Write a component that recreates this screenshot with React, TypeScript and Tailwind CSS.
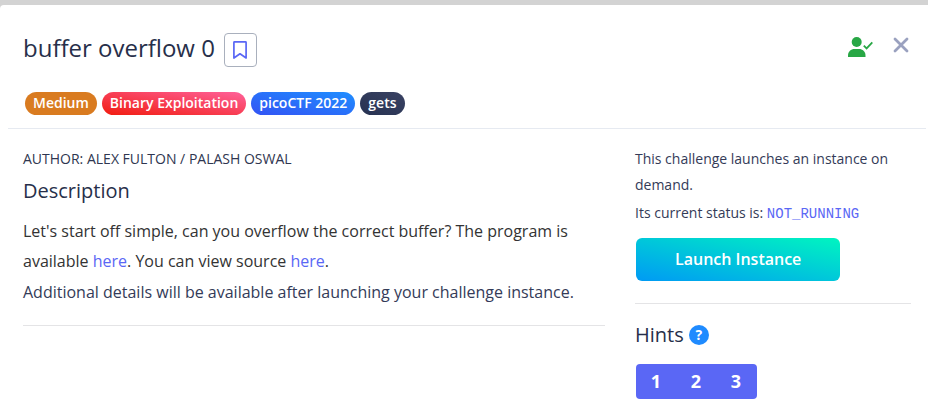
import React from 'react';

const tags = [
  { label: 'Medium', style: 'bg-[#d97b20]' },
  { label: 'Binary Exploitation', style: 'bg-linear-to-tr/srgb from-[#f11c10] to-[#ff619a]' },
  { label: 'picoCTF 2022', style: 'bg-linear-to-tr/srgb from-[#3353f4] to-[#1f8eff]' },
  { label: 'gets', style: 'bg-linear-to-tr/srgb from-[#273251] to-[#394263]' },
];

const hints = [1, 2, 3];

const BookmarkIcon = () => (
  <svg width="16" height="20" viewBox="0 0 16 20" fill="none" stroke="#5a67f5" strokeWidth="1.7" aria-hidden="true">
    <path d="M1.9 2.4Q1.9 1.8 2.5 1.8H13.5Q14.1 1.8 14.1 2.4V18L8 13.8L1.9 18Z" strokeLinejoin="round" />
  </svg>
);

const SolvedIcon = () => (
  <svg width="25" height="20" viewBox="0 0 25 20" aria-label="Solved by users" role="img">
    <circle cx="8.7" cy="5" r="5" fill="#28a745" />
    <path d="M0 20V18.5C0 14.5 3 12 6.5 12H11C14.5 12 17.5 14.5 17.5 18.5V20Z" fill="#28a745" />
    <path d="M15.8 8.6L18.6 11.4L24.3 5.4" fill="none" stroke="#28a745" strokeWidth="1.8" />
  </svg>
);

const CloseIcon = () => (
  <svg width="16" height="16" viewBox="0 0 16 16" fill="none" stroke="#9aa1bf" strokeWidth="2.8" strokeLinecap="round" aria-hidden="true">
    <path d="M2 2L14 14M14 2L2 14" />
  </svg>
);

const ChallengeHeader = () => (
  <header className="ml-2 mr-0.5 border-b border-[#e6eaf1] pr-[17px] pl-[15px] pt-7 pb-[13px]">
    <div className="flex items-start justify-between">
      <div className="flex items-start gap-[9px]">
        <h1 className="text-2xl leading-[30px] text-[#272f4a]">buffer overflow 0</h1>
        <button type="button" aria-label="Bookmark" className="flex h-[34px] w-[33px] items-center justify-center rounded border border-[#a9b0bd]">
          <BookmarkIcon />
        </button>
      </div>
      <div className="flex items-start gap-5 pt-1">
        <SolvedIcon />
        <button type="button" aria-label="Close">
          <CloseIcon />
        </button>
      </div>
    </div>
    <ul className="ml-0.5 mt-[25px] flex gap-[5px]">
      {tags.map((tag) => (
        <li key={tag.label} className={`rounded-full px-2 pb-0.5 text-sm leading-[21px] font-semibold text-white ${tag.style}`}>
          {tag.label}
        </li>
      ))}
    </ul>
  </header>
);

const Description = () => (
  <section className="w-2/3 px-[15px] pt-[17px]">
    <p className="text-sm leading-[26px] text-[#2f3650]">AUTHOR: ALEX FULTON / PALASH OSWAL</p>
    <h2 className="mt-1 text-xl leading-[30px] text-[#272f4a]">Description</h2>
    <div className="mt-2.5 border-b border-[#e4e4e6] pb-[18px] text-base leading-[30px]">
      <p className="text-[#333333]">
        Let's start off simple, can you overflow the correct buffer? The program is available{' '}
        <a href="#program" className="text-[#5a67f5]">here</a>. You can view source{' '}
        <a href="#source" className="text-[#5a67f5]">here</a>.
      </p>
      <p className="mt-px text-[#343b58]">Additional details will be available after launching your challenge instance.</p>
    </div>
  </section>
);

const InstancePanel = () => (
  <aside className="w-1/3 px-[15px] pt-[17px]">
    <div className="border-b border-[#e4e4e6] pb-[22px] text-sm leading-[26px] text-[#343b58]">
      <p>This challenge launches an instance on demand.</p>
      <p className="mt-0.5">
        Its current status is: <code className="font-['Liberation_Mono',monospace] text-sm leading-[26px] text-[#5a67f5]">NOT_RUNNING</code>
      </p>
      <button type="button" className="ml-px mt-[11px] h-[43px] rounded-md bg-linear-to-tr/srgb from-[#009af4] to-[#00f5c0] px-[39px] pb-0.5 text-base font-semibold text-white">
        Launch Instance
      </button>
    </div>
    <div className="mt-4 flex items-center gap-[5px]">
      <h2 className="text-xl leading-[30px] text-[#272f4a]">Hints</h2>
      <button type="button" aria-label="About hints" className="size-5 rounded-full bg-[#1f8bff] text-sm leading-5 font-bold text-white">
        ?
      </button>
    </div>
    <div className="ml-px mt-3.5 inline-flex overflow-hidden rounded bg-[#5a67f5] pr-px">
      {hints.map((hint) => (
        <button key={hint} type="button" className="h-[35px] w-10 text-lg leading-[35px] font-bold text-white">
          {hint}
        </button>
      ))}
    </div>
  </aside>
);

export default function App() {
  return (
    <div className="min-h-screen bg-[#d3d3d3] pt-[5px] font-['Open_Sans',sans-serif]">
      <main className="min-h-[calc(100vh-5px)] rounded-tl bg-white">
        <ChallengeHeader />
        <div className="ml-2 mr-0.5 flex">
          <Description />
          <InstancePanel />
        </div>
      </main>
    </div>
  );
}
